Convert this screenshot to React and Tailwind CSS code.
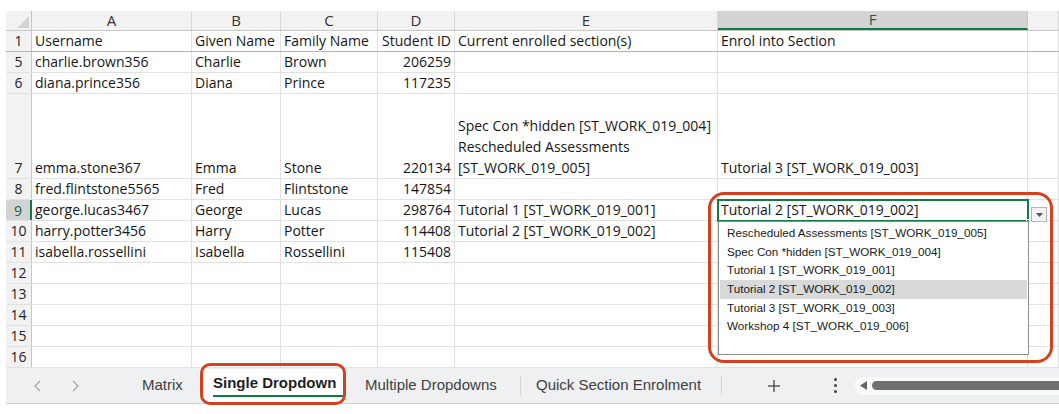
import React from 'react';

// column widths, A..G
const COLS = ['w-[160px]', 'w-[89px]', 'w-[97px]', 'w-[77px]', 'w-[263px]', 'w-[310px]', 'flex-1'];
const LETTERS = ['A', 'B', 'C', 'D', 'E', 'F', ''];

const ROWS = [
  { n: '1', cells: ['Username', 'Given Name', 'Family Name', 'Student ID', 'Current enrolled section(s)', 'Enrol into Section', ''] },
  { n: '5', cells: ['charlie.brown356', 'Charlie', 'Brown', '206259', '', '', ''] },
  { n: '6', cells: ['diana.prince356', 'Diana', 'Prince', '117235', '', '', ''] },
  {
    n: '7',
    tall: true,
    cells: [
      'emma.stone367',
      'Emma',
      'Stone',
      '220134',
      ['Spec Con *hidden [ST_WORK_019_004]', 'Rescheduled Assessments', '[ST_WORK_019_005]'],
      'Tutorial 3 [ST_WORK_019_003]',
      '',
    ],
  },
  { n: '8', cells: ['fred.flintstone5565', 'Fred', 'Flintstone', '147854', '', '', ''] },
  { n: '9', active: true, cells: ['george.lucas3467', 'George', 'Lucas', '298764', 'Tutorial 1 [ST_WORK_019_001]', 'Tutorial 2 [ST_WORK_019_002]', ''] },
  { n: '10', cells: ['harry.potter3456', 'Harry', 'Potter', '114408', 'Tutorial 2 [ST_WORK_019_002]', '', ''] },
  { n: '11', cells: ['isabella.rossellini', 'Isabella', 'Rossellini', '115408', '', '', ''] },
  { n: '12', cells: ['', '', '', '', '', '', ''] },
  { n: '13', cells: ['', '', '', '', '', '', ''] },
  { n: '14', cells: ['', '', '', '', '', '', ''] },
  { n: '15', cells: ['', '', '', '', '', '', ''] },
  { n: '16', cells: ['', '', '', '', '', '', ''] },
];

const OPTIONS = [
  'Rescheduled Assessments [ST_WORK_019_005]',
  'Spec Con *hidden [ST_WORK_019_004]',
  'Tutorial 1 [ST_WORK_019_001]',
  'Tutorial 2 [ST_WORK_019_002]',
  'Tutorial 3 [ST_WORK_019_003]',
  'Workshop 4 [ST_WORK_019_006]',
];

function HeaderRow() {
  return (
    <div className="flex h-[20px] border-b border-[#c6c6c6]">
      <div className="w-[26px] shrink-0 bg-[#f2f2f2] border-r border-[#c6c6c6] flex items-end justify-end p-[2px]">
        <svg width="12" height="12" viewBox="0 0 12 12">
          <polygon points="12,0 12,12 0,12" fill="#d4d4d4" />
        </svg>
      </div>
      {LETTERS.map((l, i) =>
        l === 'F' ? (
          <div key={i} className={`${COLS[i]} shrink-0 bg-[#d3d3d3] border-r border-[#c8c8c8] border-b-2 border-b-[#107c41] flex items-center justify-center text-[15px] text-[#0e6b3a]`}>
            {l}
          </div>
        ) : (
          <div key={i} className={`${COLS[i]} shrink-0 bg-[#f2f2f2] border-r border-[#d8d8d8] flex items-center justify-center text-[15px] text-[#333]`}>
            {l}
          </div>
        )
      )}
    </div>
  );
}

function Row({ row }) {
  const height = row.tall ? 'h-[85px]' : 'h-[21px]';
  const bottom = row.n === '1' ? 'border-b border-[#b4b4b4]' : 'border-b border-[#e1e1e1]';
  return (
    <div className={`flex ${height} ${bottom}`}>
      {row.active ? (
        <div className="w-[26px] shrink-0 bg-[#d3d3d3] border-r-2 border-[#107c41] flex items-center justify-center text-[14px] text-[#0e6b3a]">
          {row.n}
        </div>
      ) : (
        <div className="w-[26px] shrink-0 bg-[#f2f2f2] border-r border-[#c6c6c6] flex items-end justify-center text-[14px] leading-[20px] text-[#222]">
          {row.n}
        </div>
      )}
      {row.cells.map((c, i) => (
        <div
          key={i}
          className={`${COLS[i]} shrink-0 border-r border-[#e1e1e1] px-[3px] flex flex-col justify-end whitespace-nowrap text-[14px] leading-[20px] text-[#161616] ${i === 3 ? 'items-end' : 'items-start'}`}
        >
          {Array.isArray(c) ? c.map((line) => <span key={line} className="leading-[21px]">{line}</span>) : c}
        </div>
      ))}
    </div>
  );
}

function Chevron({ dir }) {
  return (
    <svg width="10" height="14" viewBox="0 0 10 14" fill="none" stroke="#a6a6a6" strokeWidth="1.3">
      {dir === 'left' ? <polyline points="7,2 2,7 7,12" /> : <polyline points="3,2 8,7 3,12" />}
    </svg>
  );
}

function TabBar() {
  return (
    <div className="flex items-center h-[36px] bg-[#eef0f1] border-b border-[#cfd2d4] text-[15px] text-[#404040] font-['Liberation_Sans',Arial,sans-serif]">
      <div className="ml-[27px]"><Chevron dir="left" /></div>
      <div className="ml-[27px]"><Chevron dir="right" /></div>
      <div className="ml-[62px] w-[44px] whitespace-nowrap">Matrix</div>
      <div className="ml-[17px] h-[34px] w-[142px] bg-white flex flex-col items-start justify-center pl-[10px]">
        <span className="font-semibold text-[#1f1f1f] whitespace-nowrap leading-[18px]">Single Dropdown</span>
        <div className="mt-[3px] h-[2px] w-[130px] bg-[#107c41]" />
      </div>
      <div className="ml-[20px] w-[140px] whitespace-nowrap">Multiple Dropdowns</div>
      <div className="ml-[15px] w-px h-[20px] bg-[#d4d6d8]" />
      <div className="ml-[15px] w-[168px] whitespace-nowrap">Quick Section Enrolment</div>
      <div className="ml-[17px] w-px h-[20px] bg-[#d4d6d8]" />
      <div className="ml-[45px]">
        <svg width="14" height="14" viewBox="0 0 14 14" stroke="#444" strokeWidth="1.3">
          <line x1="7" y1="1" x2="7" y2="13" />
          <line x1="1" y1="7" x2="13" y2="7" />
        </svg>
      </div>
      <div className="ml-[53px] flex flex-col gap-[3px]">
        <span className="w-[3px] h-[3px] rounded-full bg-[#444]" />
        <span className="w-[3px] h-[3px] rounded-full bg-[#444]" />
        <span className="w-[3px] h-[3px] rounded-full bg-[#444]" />
      </div>
      <div className="ml-[17px] flex-1 h-[18px] bg-[#f8fafa] rounded-l-full flex items-center pl-[6px]">
        <svg width="8" height="9" viewBox="0 0 8 9">
          <polygon points="7,0 7,9 0,4.5" fill="#666" />
        </svg>
        <div className="ml-[4px] flex-1 h-[9px] rounded-l-full bg-[#6f6f6f]" />
      </div>
    </div>
  );
}

export default function App() {
  return (
    <div className="relative w-[1059px] h-[414px] bg-white overflow-hidden font-['Open_Sans',sans-serif]">
      <div className="pt-[11px] pl-[6px]">
        <HeaderRow />
        {ROWS.map((r) => (
          <Row key={r.n} row={r} />
        ))}
        <TabBar />
      </div>

      {/* active cell F9 */}
      <div className="absolute left-[717px] top-[199px] w-[312px] h-[23px] border-2 border-[#107c41]" />
      <div className="absolute left-[1026px] top-[219px] w-[4px] h-[4px] bg-[#107c41] border border-white" />

      {/* dropdown arrow */}
      <div className="absolute left-[1031px] top-[207px] w-[16px] h-[15px] bg-[#f3f3f3] border border-[#b5b5b5] flex items-center justify-center">
        <svg width="7" height="4" viewBox="0 0 7 4">
          <polygon points="0,0 7,0 3.5,4" fill="#555" />
        </svg>
      </div>

      {/* list */}
      <div className="absolute left-[718px] top-[221px] w-[311px] h-[134px] bg-white border border-[#8c8c8c] pt-[2px] px-[1px] text-[11.7px] text-[#1a1a1a] font-['Liberation_Sans',Arial,sans-serif]">
        {OPTIONS.map((o) =>
          o.startsWith('Tutorial 2') ? (
            <div key={o} className="h-[18.7px] leading-[18.7px] pl-[7px] bg-[#d9d9d9] whitespace-nowrap">{o}</div>
          ) : (
            <div key={o} className="h-[18.7px] leading-[18.7px] pl-[7px] whitespace-nowrap">{o}</div>
          )
        )}
      </div>

      {/* red highlight outlines */}
      <div className="absolute left-[708px] top-[192px] w-[345px] h-[171px] border-[3px] border-[#d4411f] rounded-[16px]" />
      <div className="absolute left-[200px] top-[363px] w-[146px] h-[42px] border-[3px] border-[#d4411f] rounded-[10px]" />
    </div>
  );
}
